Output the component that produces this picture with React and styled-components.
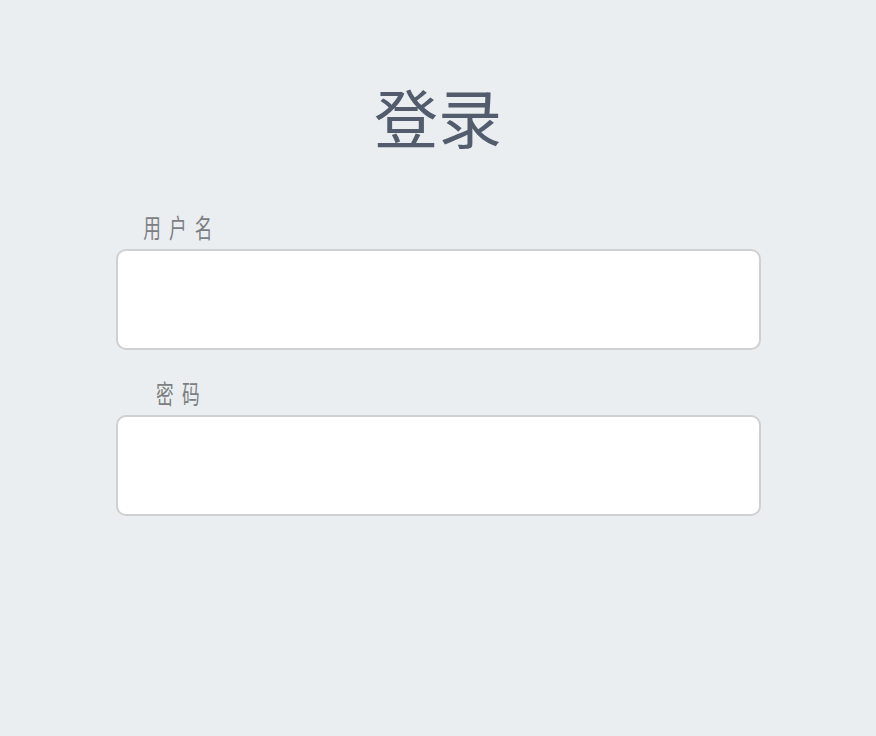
import React from 'react';
import styled, { createGlobalStyle } from 'styled-components';

const GlobalStyle = createGlobalStyle`
  html, body {
    margin: 0;
    padding: 0;
    background: #ebeef0;
  }
  body {
    font-family: "Noto Sans CJK SC", "Noto Sans", sans-serif;
    min-height: 736px;
  }
`;

const Page = styled('div')`
  display: flex;
  flex-direction: column;
  align-items: center;
  padding-top: 77px;
`;

const Title = styled('h1')`
  margin: 0 0 59px;
  font-size: 64px;
  line-height: 76px;
  font-weight: 400;
  color: #525c6c;
`;

const Form = styled('form')`
  width: 645px;
  display: flex;
  flex-direction: column;
`;

const Field = styled('div')`
  display: flex;
  flex-direction: column;
  margin-bottom: ${p => p.$gap || 0}px;
`;

const Label = styled('label')`
  width: 182px;
  text-align: center;
  font-size: 26px;
  line-height: 30px;
  letter-spacing: 12px;
  text-indent: 12px;
  color: #7b7e82;
  margin-bottom: 7px;
  transform: scaleX(0.68);
  transform-origin: left center;
`;

const Input = styled('input')`
  box-sizing: border-box;
  width: 100%;
  height: 101px;
  border: 2px solid #cfd0d2;
  border-radius: 10px;
  background: #fff;
  outline: none;
  font-size: 22px;
  padding: 0 16px;
`;

export default function App() {
  return (
    <>
      <GlobalStyle />
      <Page>
        <Title>登录</Title>
        <Form>
          <Field $gap={28}>
            <Label htmlFor="username">用户名</Label>
            <Input id="username" type="text" />
          </Field>
          <Field>
            <Label htmlFor="password">密码</Label>
            <Input id="password" type="password" />
          </Field>
        </Form>
      </Page>
    </>
  );
}
